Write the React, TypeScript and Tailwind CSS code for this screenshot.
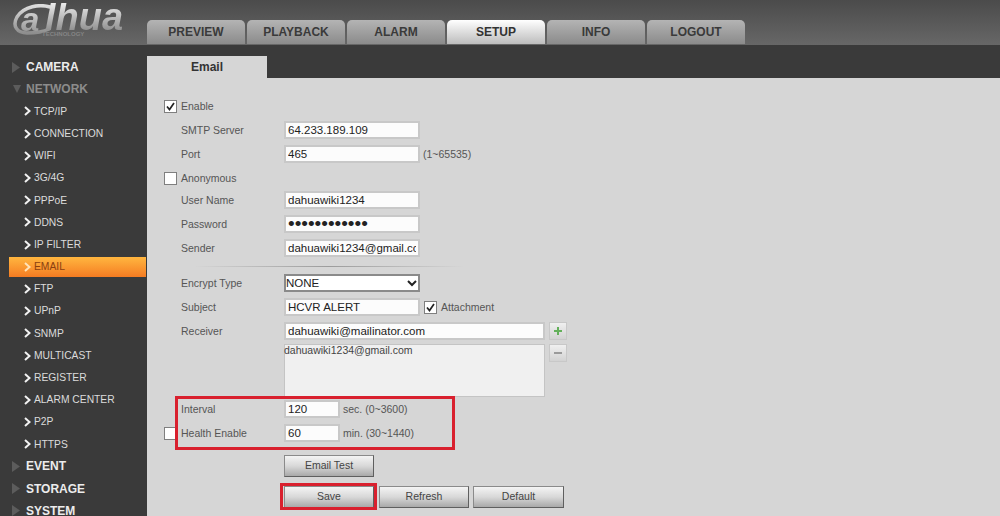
const tabs = ["PREVIEW", "PLAYBACK", "ALARM", "SETUP", "INFO", "LOGOUT"];

const networkItems = ["TCP/IP", "CONNECTION", "WIFI", "3G/4G", "PPPoE", "DDNS", "IP FILTER", "EMAIL", "FTP", "UPnP", "SNMP", "MULTICAST", "REGISTER", "ALARM CENTER", "P2P", "HTTPS"];

function Logo() {
  return (
    <div className="relative h-[45px] w-[147px] select-none">
      <svg className="absolute left-[12px] top-[4px]" width="46" height="32" viewBox="0 0 46 32" fill="none">
        <defs>
          <linearGradient id="ring" x1="0" y1="0" x2="0" y2="1">
            <stop offset="0" stopColor="#dcdcdc" />
            <stop offset="1" stopColor="#8e8e8e" />
          </linearGradient>
        </defs>
        <path d="M38 3C28 0 12 2 5 13c-5 9 0 16 10 16 8 0 16-1 22-4" stroke="url(#ring)" strokeWidth="3.500" strokeLinecap="round" />
      </svg>
      <span className="absolute left-[21px] top-[6px] block h-[27px] bg-gradient-to-b from-[#e2e2e2] to-[#969696] bg-clip-text text-[33px] font-bold italic leading-[27px] text-transparent">
        a
      </span>
      <span className="absolute left-[45px] top-[3px] block h-[28px] bg-gradient-to-b from-[#ececec] to-[#8f8f8f] bg-clip-text pr-[3px] text-[38px] font-bold italic leading-[28px] text-transparent">
        lhua
      </span>
      <span className="absolute left-[42px] top-[31px] text-[6px] font-bold leading-[7px] text-[#858585]">TECHNOLOGY</span>
    </div>
  );
}

function Chevron({ light }: { light?: boolean }) {
  return (
    <svg className="mr-[3px] shrink-0" width="7" height="10" viewBox="0 0 7 10" fill="none">
      <path d="M1 1l4.500 4L1 9" stroke={light ? "#ffe3b8" : "#f2f2f2"} strokeWidth="2" />
    </svg>
  );
}

function GroupHeader({ label, open }: { label: string; open?: boolean }) {
  return (
    <div className="flex h-[22.2px] items-center pl-[12px]">
      <span className="flex w-[14px] shrink-0 items-center">
        {open ? (
          <svg width="10" height="8" viewBox="0 0 10 8">
            <path d="M1 0h8L5 8z" fill="#5c5c5c" />
          </svg>
        ) : (
          <svg width="8" height="11" viewBox="0 0 8 11">
            <path d="M0 0l8 5.500-8 5.500z" fill="#5c5c5c" />
          </svg>
        )}
      </span>
      <span className={`text-[12px] font-bold ${open ? "text-[#8c8c8c]" : "text-[#ececec]"}`}>{label}</span>
    </div>
  );
}

function Sidebar() {
  return (
    <aside className="h-[471px] w-[147px] shrink-0 overflow-hidden bg-[#3a3a3a] pt-[11px]">
      <GroupHeader label="CAMERA" />
      <GroupHeader label="NETWORK" open />
      {networkItems.map((item) =>
        item === "EMAIL" ? (
          <div key={item} className="flex h-[22.2px] items-center">
            <div className="ml-[9px] flex h-[20px] w-[137px] items-center bg-gradient-to-b from-[#ffb63f] to-[#f47b22] pl-[15px] text-[10.3px] text-[#8a3f10]">
              <Chevron light />
              {item}
            </div>
          </div>
        ) : (
          <div key={item} className="flex h-[22.2px] items-center pl-[24px] text-[10.3px] text-[#dcdcdc]">
            <Chevron />
            {item}
          </div>
        ),
      )}
      <GroupHeader label="EVENT" />
      <GroupHeader label="STORAGE" />
      <GroupHeader label="SYSTEM" />
    </aside>
  );
}

function CheckBox({ checked }: { checked?: boolean }) {
  return (
    <span className="flex h-[13px] w-[13px] items-center justify-center border border-[#7f7f7f] bg-white">
      {checked && (
        <svg width="9" height="9" viewBox="0 0 9 9" fill="none">
          <path d="M1 4.500l2.500 3L8 1" stroke="#222" strokeWidth="1.700" />
        </svg>
      )}
    </span>
  );
}

function Row({ label, check, checked, className, children }: { label?: string; check?: boolean; checked?: boolean; className?: string; children?: React.ReactNode }) {
  return (
    <div className={`flex h-[18px] items-center ${className ?? ""}`}>
      <span className="flex w-[17px] shrink-0 items-center">{check && <CheckBox checked={checked} />}</span>
      <span className="w-[103px] shrink-0 pt-[1px] text-[10.5px] text-[#555]">{label}</span>
      {children}
    </div>
  );
}

function TextInput({ value, type, className }: { value: string; type?: string; className?: string }) {
  return (
    <input
      readOnly
      type={type ?? "text"}
      value={value}
      className={`h-[18px] border-2 border-[#c8c8c8] bg-[#fcfcfc] px-[2px] text-[#222] outline-none ${type === "password" ? "text-[19px] leading-none" : "text-[11.5px]"} ${className ?? "w-[136px]"}`}
    />
  );
}

function Hint({ children }: { children: React.ReactNode }) {
  return <span className="ml-[3px] pt-[1px] text-[10.5px] text-[#555]">{children}</span>;
}

function Btn({ label, className }: { label: string; className?: string }) {
  return (
    <button
      type="button"
      className={`flex h-[22px] items-center justify-center border border-[#8a8a8a] border-b-[#5f5f5f] border-r-[#5f5f5f] bg-gradient-to-b from-[#f4f4f4] via-[#d8d8d8] to-[#a9a9a9] text-[10.5px] text-[#444] ${className ?? "w-[90px]"}`}
    >
      {label}
    </button>
  );
}

function SquareBtn({ children }: { children: React.ReactNode }) {
  return (
    <span className="ml-[4px] flex h-[18px] w-[18px] items-center justify-center border border-[#c8c8c8] bg-gradient-to-b from-[#f0f0f0] to-[#d2d2d2]">
      {children}
    </span>
  );
}

function EmailForm() {
  return (
    <div className="relative flex-1 bg-[#d6d6d6] pl-[17px] pt-[19px]">
      <Row check checked label="Enable" />
      <Row label="SMTP Server" className="mt-[6px]">
        <TextInput value="64.233.189.109" />
      </Row>
      <Row label="Port" className="mt-[6px]">
        <TextInput value="465" />
        <Hint>(1~65535)</Hint>
      </Row>
      <Row check label="Anonymous" className="mt-[6px]" />
      <Row label="User Name" className="mt-[4px]">
        <TextInput value="dahuawiki1234" />
      </Row>
      <Row label="Password" className="mt-[6px]">
        <TextInput type="password" value="dahuawiki123" />
      </Row>
      <Row label="Sender" className="mt-[6px]">
        <TextInput value="dahuawiki1234@gmail.com" />
      </Row>

      <div className="ml-[30px] mt-[9px] h-[1px] w-[270px] bg-gradient-to-r from-transparent via-[#9c9c9c] to-transparent" />

      <Row label="Encrypt Type" className="mt-[7px]">
        <div className="relative h-[18px] w-[136px]">
          <select className="block h-[18px] w-[136px] appearance-none border-2 border-[#8a8a8a] bg-white px-0 py-0 text-[11.5px] leading-[14px] text-[#222] outline-none">
            <option>NONE</option>
          </select>
          <svg className="absolute right-[3px] top-[6px]" width="10" height="7" viewBox="0 0 10 7" fill="none">
            <path d="M1 1l4 4 4-4" stroke="#222" strokeWidth="2" />
          </svg>
        </div>
      </Row>
      <Row label="Subject" className="mt-[6px]">
        <TextInput value="HCVR ALERT" />
        <span className="ml-[4px] flex items-center">
          <CheckBox checked />
        </span>
        <span className="ml-[4px] pt-[1px] text-[10.5px] text-[#555]">Attachment</span>
      </Row>
      <Row label="Receiver" className="mt-[6px]">
        <TextInput value="dahuawiki@mailinator.com" className="w-[261px]" />
        <SquareBtn>
          <svg width="10" height="10" viewBox="0 0 10 10">
            <path d="M5 1v8M1 5h8" stroke="#63b05a" strokeWidth="2" />
          </svg>
        </SquareBtn>
      </Row>
      <div className="mt-[4px] flex items-start pl-[120px]">
        <div className="h-[53px] w-[261px] border border-[#c4c4c4] bg-[#f0f0f0] indent-[-1px] text-[10.5px] leading-[10px] text-[#444]">dahuawiki1234@gmail.com</div>
        <SquareBtn>
          <svg width="10" height="10" viewBox="0 0 10 10">
            <path d="M1 5h8" stroke="#9a9a9a" strokeWidth="2" />
          </svg>
        </SquareBtn>
      </div>
      <Row label="Interval" className="mt-[3px]">
        <TextInput value="120" className="w-[56px]" />
        <Hint>sec. (0~3600)</Hint>
      </Row>
      <Row check label="Health Enable" className="mt-[6px]">
        <TextInput value="60" className="w-[56px]" />
        <Hint>min. (30~1440)</Hint>
      </Row>
      <div className="mt-[13px] pl-[120px]">
        <Btn label="Email Test" />
      </div>
      <div className="mt-[9px] flex pl-[120px]">
        <Btn label="Save" />
        <Btn label="Refresh" className="ml-[5px] w-[90px]" />
        <Btn label="Default" className="ml-[4px] w-[91px]" />
      </div>

      {/* annotation boxes */}
      <div className="absolute left-[28px] top-[318px] h-[54px] w-[280px] border-[3px] border-[#d9202e]" />
      <div className="absolute left-[133px] top-[405px] h-[27px] w-[97px] border-[3px] border-[#d9202e]" />
    </div>
  );
}

export default function App() {
  return (
    <div className="flex h-[516px] w-[1000px] flex-col overflow-hidden font-['Liberation_Sans',Arial,sans-serif]">
      <header className="flex h-[45px] shrink-0 bg-gradient-to-b from-[#4b4b4b] to-[#676767]">
        <div className="w-[147px] shrink-0">
          <Logo />
        </div>
        <nav className="flex items-end gap-[2px] pb-[1px]">
          {tabs.map((tab) => (
            <div
              key={tab}
              className={`flex h-[24px] w-[98px] items-center justify-center rounded-t-[5px] text-[12px] font-bold ${
                tab === "SETUP"
                  ? "bg-gradient-to-b from-[#ffffff] to-[#bdbdbd] text-[#333]"
                  : "bg-gradient-to-b from-[#b4b4b4] to-[#8b8b8b] text-[#3a3a3a]"
              }`}
            >
              {tab}
            </div>
          ))}
        </nav>
      </header>
      <div className="flex flex-1">
        <Sidebar />
        <main className="flex flex-1 flex-col">
          <div className="flex h-[33px] shrink-0 items-end bg-[#3a3a3a]">
            <div className="flex h-[22px] w-[120px] items-center justify-center bg-[#d6d6d6] pb-[1px] text-[12px] font-bold text-[#333]">Email</div>
          </div>
          <EmailForm />
        </main>
      </div>
    </div>
  );
}
